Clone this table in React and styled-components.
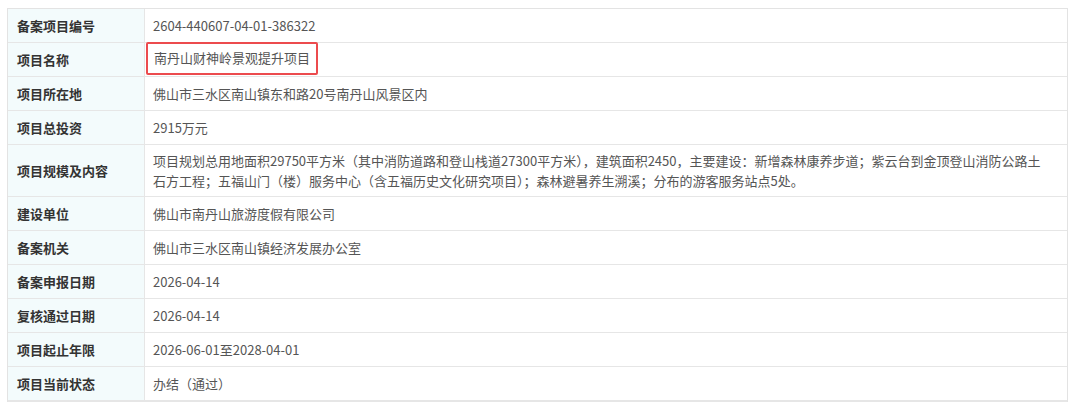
import React from 'react';
import styled, { createGlobalStyle } from 'styled-components';

const GlobalStyle = createGlobalStyle`
  body {
    margin: 0;
    background: #ffffff;
    font-family: "Noto Sans CJK SC", "Noto Sans", sans-serif;
  }
`;

const Page = styled.div`
  padding: 8px 12px 6px 7px;
`;

const Table = styled.div`
  border: 1px solid #e3e3e3;
  border-bottom: none;
`;

const Row = styled.div`
  display: grid;
  grid-template-columns: 137px 1fr;
  min-height: ${p => (p.tall ? 51 : 33)}px;
  border-bottom: ${p => (p.last ? 2 : 1)}px solid #e6e6e6;
`;

const Label = styled.div`
  display: flex;
  align-items: center;
  padding: 0 9px;
  background: #f3fbfc;
  border-right: 1px solid #e6e6e6;
  color: #333;
  font-size: 13px;
  font-weight: 700;
`;

const Value = styled.div`
  display: flex;
  align-items: center;
  padding: 0 8px;
  color: #555;
  font-size: 13px;
  line-height: 20px;
`;

const Highlight = styled.span`
  margin: -2px 0 0 -7px;
  padding: 4px 6px 5px 6px;
  border: 2px solid #ec4b4e;
  border-radius: 2px;
`;

const rows = [
  ['备案项目编号', '2604-440607-04-01-386322'],
  ['项目名称', '南丹山财神岭景观提升项目', 'mark'],
  ['项目所在地', '佛山市三水区南山镇东和路20号南丹山风景区内'],
  ['项目总投资', '2915万元'],
  [
    '项目规模及内容',
    <span>
      项目规划总用地面积29750平方米（其中消防道路和登山栈道27300平方米），建筑面积2450，主要建设：新增森林康养步道；紫云台到金顶登山消防公路土
      <br />
      石方工程；五福山门（楼）服务中心（含五福历史文化研究项目）；森林避暑养生溯溪；分布的游客服务站点5处。
    </span>,
    'tall',
  ],
  ['建设单位', '佛山市南丹山旅游度假有限公司'],
  ['备案机关', '佛山市三水区南山镇经济发展办公室'],
  ['备案申报日期', '2026-04-14'],
  ['复核通过日期', '2026-04-14'],
  ['项目起止年限', '2026-06-01至2028-04-01'],
  ['项目当前状态', '办结（通过）'],
];

export default function App() {
  return (
    <Page>
      <GlobalStyle />
      <Table>
        {rows.map(([label, value, kind], i) => (
          <Row key={label} tall={kind === 'tall'} last={i === rows.length - 1}>
            <Label>{label}</Label>
            <Value>{kind === 'mark' ? <Highlight>{value}</Highlight> : value}</Value>
          </Row>
        ))}
      </Table>
    </Page>
  );
}
